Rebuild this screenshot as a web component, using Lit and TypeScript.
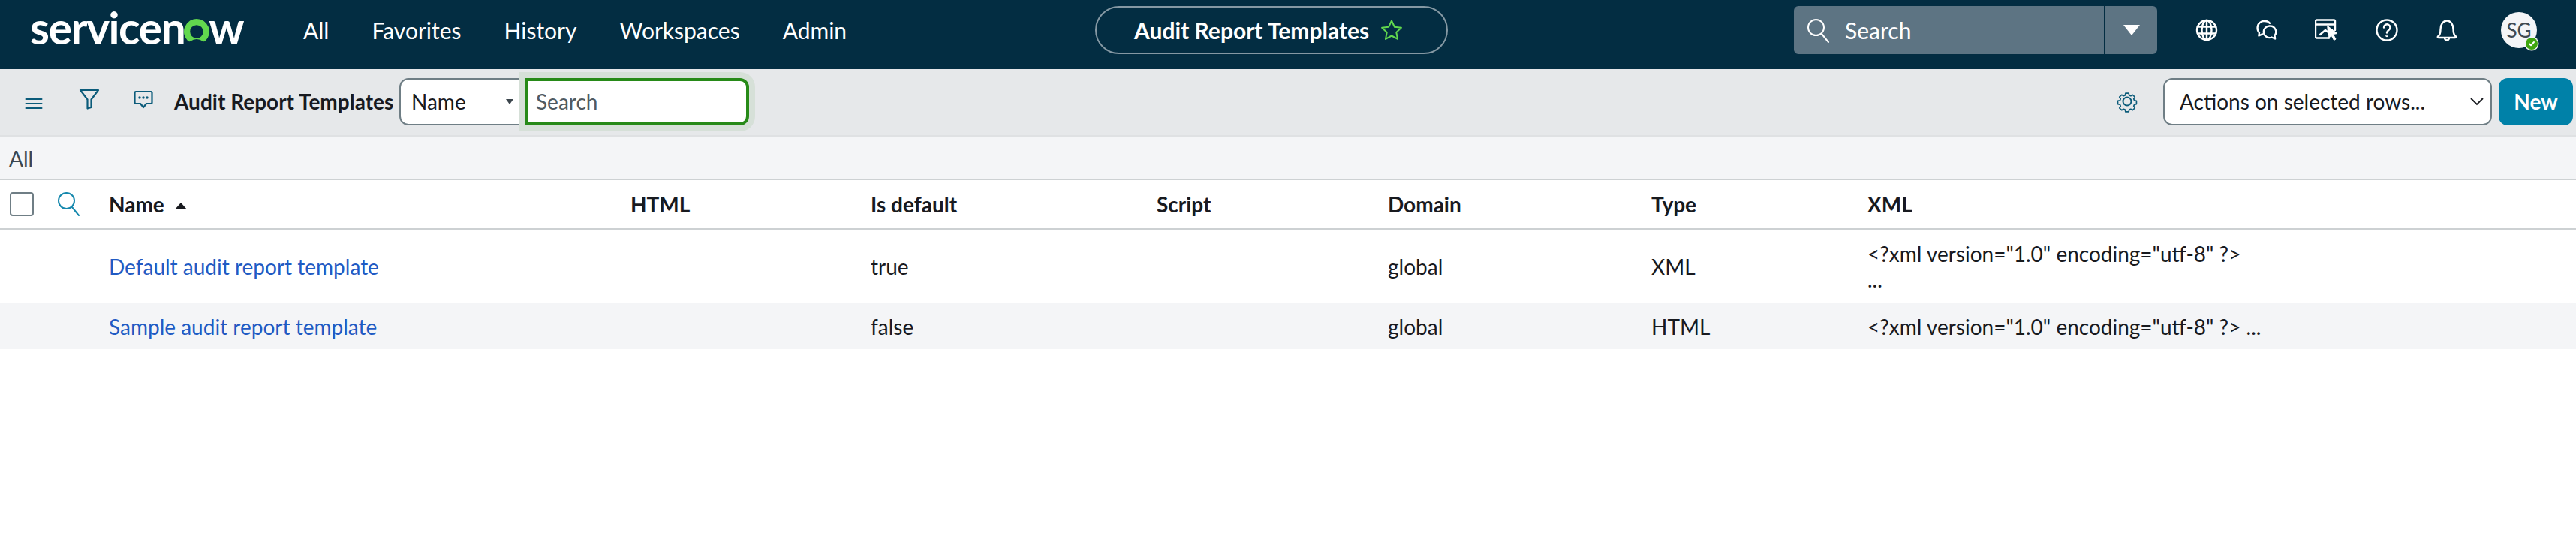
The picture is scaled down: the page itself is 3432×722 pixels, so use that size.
import { LitElement, html, css, svg } from 'lit';
import { customElement } from 'lit/decorators.js';

const logoO = html`<svg class="logo__o" width="34" height="34" viewBox="0 0 34 34" aria-hidden="true">
  <path fill="#62d84e" fill-rule="evenodd" d="M17 0a17 17 0 0 1 11.6 29.4c-1 1-2.5 1-3.600.3A13.500 13.500 0 0 0 17 27a13.500 13.500 0 0 0-8 2.700c-1.100.7-2.600.7-3.600-.3A17 17 0 0 1 17 0Zm0 8.200a8.800 8.800 0 1 0 0 17.600 8.800 8.800 0 0 0 0-17.600Z"/>
</svg>`;

const stroke = (w: number, h: number, body: unknown, color = '#fff', sw = 2.4) => html`
  <svg width=${w} height=${h} viewBox="0 0 ${w} ${h}" fill="none" stroke=${color} stroke-width=${sw} stroke-linecap="round" stroke-linejoin="round" aria-hidden="true">${body}</svg>`;

const icons = {
  search: (color: string, sw: number) => stroke(30, 34, svg`<circle cx="12.500" cy="12.500" r="10.500"/><path d="M20 21l9 11"/>`, color, sw),
  globe: stroke(30, 30, svg`<circle cx="15" cy="15" r="13"/><ellipse cx="15" cy="15" rx="6.500" ry="13"/><path d="M3 10.500h24M3 19.500h24M15 2v26"/>`),
  chat: stroke(30, 28, svg`<path d="M12.500 2a9 9 0 0 1 6.500 2.800M5 17.500a9 9 0 1 1 14-12.700M5 17.500l-.6 4 4.600-2.200"/><path d="M19.500 8.500a7.800 7.800 0 0 1 6 12.700l.6 4.300-4.600-2a7.800 7.800 0 1 1-2-15Z"/>`),
  window: html`<svg width="32" height="30" viewBox="0 0 32 30" fill="none" stroke="#fff" stroke-width="2.400" stroke-linecap="round" stroke-linejoin="round" aria-hidden="true">
    <path d="M27 15V3a1.500 1.500 0 0 0-1.500-1.500h-23A1.500 1.500 0 0 0 1 3v21a1.500 1.500 0 0 0 1.500 1.500H19M1 7.500h26M7 21l7-6 4 3"/>
    <path fill="#fff" stroke-width="1" d="M17 9.500l13 10-5.500 1 3.500 6.500-2.500 1.500-3.500-6.500-3.500 4Z"/>
  </svg>`,
  help: html`<svg width="30" height="30" viewBox="0 0 30 30" fill="none" stroke="#fff" stroke-width="2.400" stroke-linecap="round" aria-hidden="true">
    <circle cx="15" cy="15" r="13.500"/><path d="M11 11.500a4.200 4.200 0 1 1 6.500 3.500c-1.500 1-2.500 1.800-2.500 3.500"/><circle cx="15" cy="22.500" r=".6" fill="#fff"/>
  </svg>`,
  bell: stroke(30, 30, svg`<path d="M3 23.500c3-2 3.500-5 3.500-9.500 0-6.500 3.500-11.500 8.500-11.500s8.500 5 8.500 11.500c0 4.500.5 7.500 3.500 9.500.6.800.2 1.500-.8 1.500H3.800c-1 0-1.400-.7-.8-1.500Z"/><path d="M12 25.500a3 3 0 0 0 6 0"/>`),
  menu: stroke(24, 16, svg`<path d="M1.500 2h21M1.500 8h21M1.500 14h21"/>`, '#0b5b7a', 2),
  filter: stroke(28, 28, svg`<path d="M2 2h24L16.500 14.500V25l-5 1.500v-12Z"/>`, '#0b5b7a', 2.200),
  comment: html`<svg width="26" height="26" viewBox="0 0 26 26" fill="none" stroke="#0b5b7a" stroke-width="2.200" stroke-linejoin="round" aria-hidden="true">
    <path d="M3 2h20a1.500 1.500 0 0 1 1.500 1.500v13A1.500 1.500 0 0 1 23 18h-6l-4 5-4-5H3a1.500 1.500 0 0 1-1.500-1.500v-13A1.500 1.500 0 0 1 3 2Z"/>
    <g fill="#0b5b7a" stroke="none"><circle cx="8" cy="10" r="1.700"/><circle cx="13" cy="10" r="1.700"/><circle cx="18" cy="10" r="1.700"/></g>
  </svg>`,
  gear: html`<svg width="30" height="30" viewBox="0 0 30 30" fill="none" stroke="#0b5b7a" stroke-width="2" stroke-linejoin="round" aria-hidden="true">
    <circle cx="15" cy="15" r="5.500"/>
    <path d="M12.500 2h5l.8 3.400 2.400 1 3-1.800 3.500 3.500-1.800 3 1 2.400 3.400.8v5l-3.400.8-1 2.400 1.800 3-3.500 3.500-3-1.800-2.400 1-.8 3.400h-5l-.8-3.400-2.400-1-3 1.800-3.500-3.500 1.800-3-1-2.400-3.400-.8v-5l3.400-.8 1-2.400-1.800-3 3.500-3.500 3 1.800 2.400-1Z" transform="translate(2.400 2.400) scale(.84)"/>
  </svg>`,
};

const columns = ['HTML', 'Is default', 'Script', 'Domain', 'Type', 'XML'];
const rows = [
  { name: 'Default audit report template', isDefault: 'true', domain: 'global', type: 'XML', xml: ['<?xml version="1.0" encoding="utf-8" ?>', '...'] },
  { name: 'Sample audit report template', isDefault: 'false', domain: 'global', type: 'HTML', xml: ['<?xml version="1.0" encoding="utf-8" ?> ...'] },
];

@customElement('app-root')
export class AppRoot extends LitElement {
  static override styles = css`
    :host {
      display: block;
      min-height: 722px;
      background: #fff;
      font-family: Lato, 'Liberation Sans', sans-serif;
      font-size: 28px;
      color: #181a1f;
    }
    * { box-sizing: border-box; }

    .header {
      display: flex;
      align-items: center;
      height: 92px;
      padding: 0 0 12px 40px;
      background: #032d42;
      color: #fff;
    }
    .logo {
      display: flex;
      align-items: baseline;
      width: 296px;
      margin-top: -6px;
      font: 700 59px/60px Lato, sans-serif;
      letter-spacing: -1.5px;
    }
    .logo__o { margin: 0 -1px; align-self: flex-end; position: relative; top: -8px; flex: none; }
    .nav {
      display: flex;
      gap: 57px;
      margin-left: 68px;
      font-size: 30px;
      line-height: 40px;
    }
    .pill {
      display: flex;
      align-items: center;
      width: 470px;
      height: 64px;
      margin-left: 331px;
      padding-left: 50px;
      border: 2px solid #8598a3;
      border-radius: 32px;
      font-size: 30px;
      font-weight: 700;
    }
    .pill svg { margin-left: 15px; }
    .global-search {
      display: flex;
      width: 484px;
      height: 64px;
      margin-left: 461px;
      border-radius: 6px;
      background: #5d7483;
      overflow: hidden;
    }
    .global-search__field {
      display: flex;
      align-items: center;
      flex: 1;
      padding-left: 17px;
      gap: 21px;
      font-size: 30px;
      border-right: 2px solid #032d42;
    }
    .global-search__field svg { margin-top: 2px; }
    .global-search__caret {
      display: flex;
      align-items: center;
      justify-content: center;
      width: 69px;
    }
    .tri-down {
      width: 0;
      height: 0;
      border-left: 11px solid transparent;
      border-right: 11px solid transparent;
      border-top: 14px solid #fff;
    }
    .tools { display: flex; margin-left: 26px; }
    .tools__icon {
      display: flex;
      align-items: center;
      justify-content: center;
      width: 80px;
    }
    .avatar {
      position: relative;
      display: flex;
      align-items: center;
      justify-content: center;
      width: 48px;
      height: 48px;
      margin-left: 32px;
      border-radius: 50%;
      background: #f4f5f7;
      color: #3f4a52;
      font-size: 26px;
    }
    .avatar__badge {
      position: absolute;
      right: -1px;
      bottom: -2px;
      width: 16px;
      height: 16px;
      border-radius: 50%;
      background: #3fa60f;
      box-shadow: 0 0 0 1.500px #f4f5f7;
    }
    .avatar__badge svg { display: block; }

    .toolbar {
      display: flex;
      align-items: center;
      height: 90px;
      padding: 0 4px 2px 33px;
      background: #e6e8ea;
      border-bottom: 2px solid #dfe1e3;
    }
    .toolbar__menu { margin-right: 48px; }
    .toolbar__filter { margin-right: 45px; }
    .toolbar__comment { margin-right: 28px; }
    .toolbar__title { width: 300px; font-weight: 700; white-space: nowrap; }
    .field-select {
      display: flex;
      align-items: center;
      justify-content: space-between;
      width: 168px;
      height: 63px;
      padding: 0 16px 0 14px;
      border: 2px solid #6f7e85;
      border-right: 0;
      border-radius: 12px 0 0 12px;
      background: #fff;
    }
    .tri-small {
      width: 0;
      height: 0;
      border-left: 5px solid transparent;
      border-right: 5px solid transparent;
      border-top: 7px solid #3c464d;
    }
    .field-input {
      width: 298px;
      height: 63px;
      padding: 0 10px;
      border: 4px solid #278a18;
      border-radius: 0 12px 12px 0;
      outline: none;
      box-shadow: 0 0 0 8px #d6e0d8;
      background: #fff;
      font: 400 28px Lato, sans-serif;
      color: #181a1f;
    }
    .field-input::placeholder { color: #4f5a62; opacity: 1; }
    .toolbar__gear { margin-left: auto; margin-right: 33px; display: flex; }
    .actions {
      display: flex;
      align-items: center;
      justify-content: space-between;
      width: 438px;
      height: 63px;
      padding: 0 8px 0 20px;
      border: 2px solid #6f7e85;
      border-radius: 12px;
      background: #fff;
    }
    .btn-new {
      width: 99px;
      height: 63px;
      margin-left: 9px;
      border: 0;
      border-radius: 12px;
      background: #0081a8;
      color: #fff;
      font: 700 28px Lato, sans-serif;
    }

    .breadcrumb {
      height: 58px;
      padding: 10px 12px 0;
      line-height: 38px;
      background: #f4f5f7;
      color: #3b464f;
      border-bottom: 2px solid #cdd1d3;
    }

    table {
      width: 100%;
      border-collapse: collapse;
      table-layout: fixed;
    }
    th, td { padding: 0; text-align: left; }
    th {
      height: 65px;
      font-weight: 700;
      border-bottom: 2px solid #cdd1d3;
    }
    td { line-height: 34px; }
    tbody tr:nth-child(1) { height: 99px; }
    tbody tr:nth-child(2) { height: 61px; background: #f4f5f7; }
    .col-check { width: 76px; padding-left: 13px; }
    .col-search { width: 69px; }
    .col-name { width: 695px; }
    .col-html { width: 320px; }
    .col-default { width: 381px; }
    .col-script { width: 308px; }
    .col-domain { width: 351px; }
    .col-type { width: 288px; }
    .checkbox {
      display: block;
      width: 32px;
      height: 32px;
      border: 2px solid #6f7e85;
      border-radius: 4px;
      background: #fff;
    }
    .col-search svg { display: block; }
    .sort {
      display: inline-block;
      width: 0;
      height: 0;
      margin: 0 0 3px 14px;
      vertical-align: middle;
      border-left: 8px solid transparent;
      border-right: 8px solid transparent;
      border-bottom: 9px solid #181a1f;
    }
    a { color: #1f5bc4; text-decoration: none; }
    .xml-line { display: block; white-space: nowrap; }
  `;

  override render() {
    return html`
      <header class="header">
        <div class="logo">servicen${logoO}w</div>
        <nav class="nav">
          <span>All</span><span>Favorites</span><span>History</span><span>Workspaces</span><span>Admin</span>
        </nav>
        <div class="pill">
          <span>Audit Report Templates</span>
          <svg width="30" height="28" viewBox="0 0 30 28" fill="none" stroke="#62d84e" stroke-width="2" stroke-linejoin="round" aria-hidden="true">
            <path d="M15 1.500l3.900 8.200 9 1.100-6.600 6.200 1.700 8.900-8-4.400-8 4.400 1.700-8.900-6.600-6.200 9-1.100Z"/>
          </svg>
        </div>
        <div class="global-search">
          <div class="global-search__field">${icons.search('#fff', 2)}<span>Search</span></div>
          <div class="global-search__caret"><span class="tri-down"></span></div>
        </div>
        <div class="tools">
          <span class="tools__icon">${icons.globe}</span>
          <span class="tools__icon">${icons.chat}</span>
          <span class="tools__icon">${icons.window}</span>
          <span class="tools__icon">${icons.help}</span>
          <span class="tools__icon">${icons.bell}</span>
        </div>
        <div class="avatar">SG
          <span class="avatar__badge">
            <svg width="16" height="16" viewBox="0 0 16 16" fill="none" stroke="#fff" stroke-width="2" stroke-linecap="round" stroke-linejoin="round"><path d="M4.800 8.300l2.200 2 4-4.300"/></svg>
          </span>
        </div>
      </header>

      <div class="toolbar">
        <span class="toolbar__menu">${icons.menu}</span>
        <span class="toolbar__filter">${icons.filter}</span>
        <span class="toolbar__comment">${icons.comment}</span>
        <span class="toolbar__title">Audit Report Templates</span>
        <div class="field-select"><span>Name</span><span class="tri-small"></span></div>
        <input class="field-input" placeholder="Search" />
        <span class="toolbar__gear">${icons.gear}</span>
        <div class="actions">
          <span>Actions on selected rows...</span>
          <svg width="20" height="14" viewBox="0 0 20 14" fill="none" stroke="#181a1f" stroke-width="1.800"><path d="M2 3l8 8 8-8"/></svg>
        </div>
        <button class="btn-new">New</button>
      </div>

      <div class="breadcrumb">All</div>

      <table>
        <thead>
          <tr>
            <th class="col-check"><span class="checkbox"></span></th>
            <th class="col-search">${icons.search('#1588ad', 2)}</th>
            <th class="col-name">Name<span class="sort"></span></th>
            ${columns.map((c) => html`<th class=${`col-${{ HTML: 'html', 'Is default': 'default', Script: 'script', Domain: 'domain', Type: 'type' }[c] ?? 'xml'}`}>${c}</th>`)}
          </tr>
        </thead>
        <tbody>
          ${rows.map((r) => html`
            <tr>
              <td></td>
              <td></td>
              <td><a href="#">${r.name}</a></td>
              <td></td>
              <td>${r.isDefault}</td>
              <td></td>
              <td>${r.domain}</td>
              <td>${r.type}</td>
              <td>${r.xml.map((l) => html`<span class="xml-line">${l}</span>`)}</td>
            </tr>
          `)}
        </tbody>
      </table>
    `;
  }
}
